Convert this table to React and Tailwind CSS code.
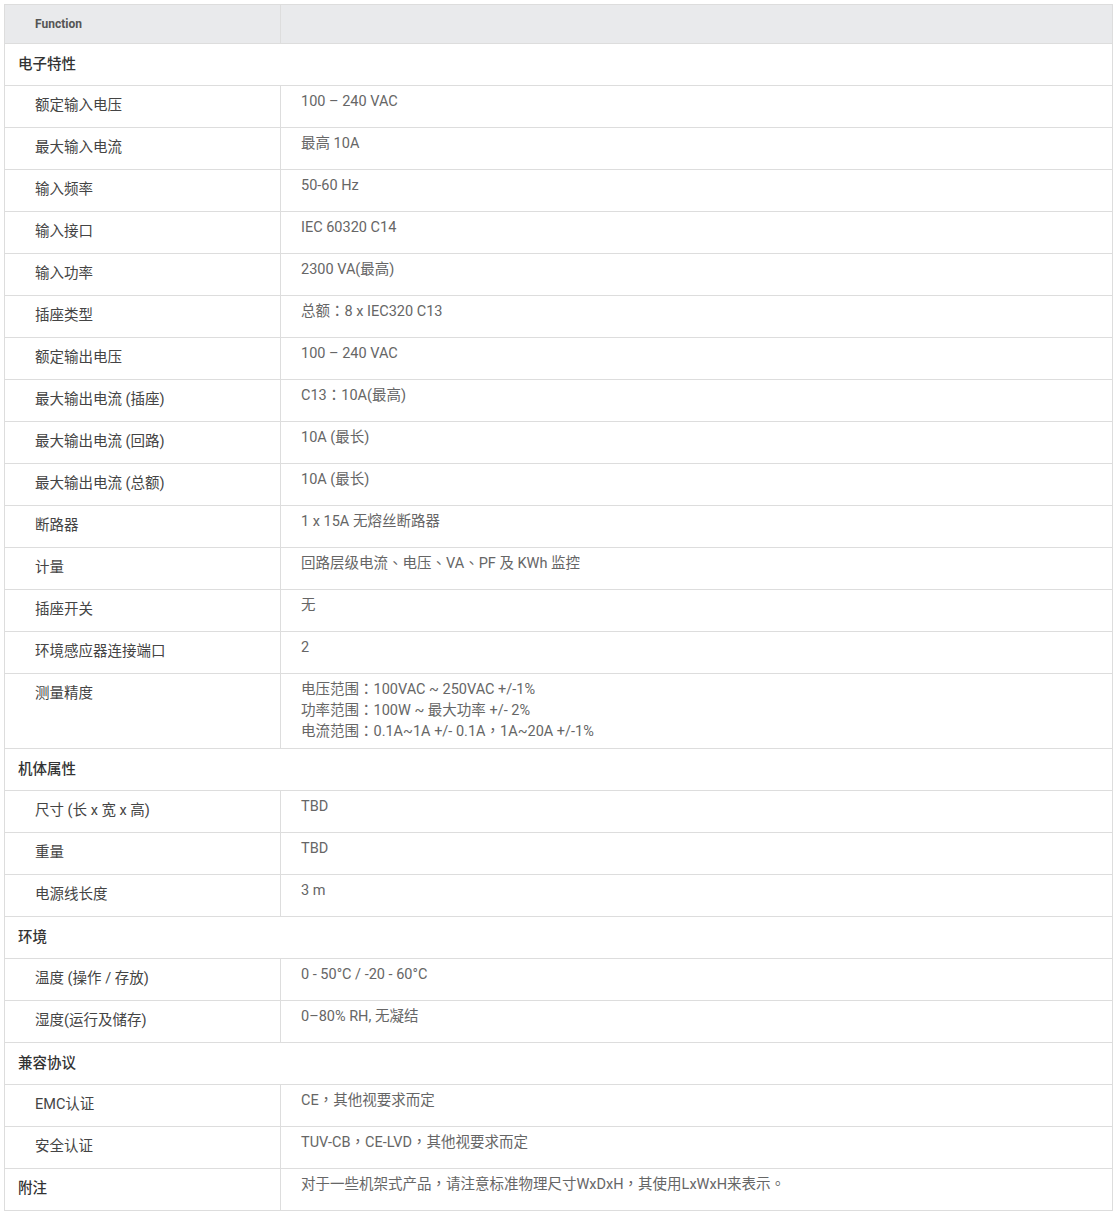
import React from "react";

const sections = [
  {
    title: "电子特性",
    rows: [
      ["额定输入电压", ["100 – 240 VAC"]],
      ["最大输入电流", ["最高 10A"]],
      ["输入频率", ["50-60 Hz"]],
      ["输入接口", ["IEC 60320 C14"]],
      ["输入功率", ["2300 VA(最高)"]],
      ["插座类型", ["总额：8 x IEC320 C13"]],
      ["额定输出电压", ["100 – 240 VAC"]],
      ["最大输出电流 (插座)", ["C13：10A(最高)"]],
      ["最大输出电流 (回路)", ["10A (最长)"]],
      ["最大输出电流 (总额)", ["10A (最长)"]],
      ["断路器", ["1 x 15A 无熔丝断路器"]],
      ["计量", ["回路层级电流、电压、VA、PF 及 KWh 监控"]],
      ["插座开关", ["无"]],
      ["环境感应器连接端口", ["2"]],
      [
        "测量精度",
        [
          "电压范围：100VAC ~ 250VAC +/-1%",
          "功率范围：100W ~ 最大功率 +/- 2%",
          "电流范围：0.1A~1A +/- 0.1A，1A~20A +/-1%",
        ],
      ],
    ],
  },
  {
    title: "机体属性",
    rows: [
      ["尺寸 (长 x 宽 x 高)", ["TBD"]],
      ["重量", ["TBD"]],
      ["电源线长度", ["3 m"]],
    ],
  },
  {
    title: "环境",
    rows: [
      ["温度 (操作 / 存放)", ["0 - 50°C / -20 - 60°C"]],
      ["湿度(运行及储存)", ["0–80% RH, 无凝结"]],
    ],
  },
  {
    title: "兼容协议",
    rows: [
      ["EMC认证", ["CE，其他视要求而定"]],
      ["安全认证", ["TUV-CB，CE-LVD，其他视要求而定"]],
    ],
  },
];

const valueFont = { fontFamily: "Roboto, 'Noto Sans CJK TC', sans-serif" };

function Row({ label, lines }) {
  return (
    <div className="flex border-b border-[#dddddd]">
      <div className="w-[276px] shrink-0 border-r border-[#dddddd] pl-[30px] pt-[9px] pb-[11px] leading-[21px] text-[#444]">
        {label}
      </div>
      <div
        className="flex-1 pl-[20px] pt-[5px] pb-[6px] leading-[21px] text-[#666]"
        style={valueFont}
      >
        {lines.map((l, i) => (
          <div key={i}>{l}</div>
        ))}
      </div>
    </div>
  );
}

export default function App() {
  return (
    <div
      className="bg-white min-h-[1232px] pt-[4px] pl-[4px] text-[14.5px]"
      style={{ fontFamily: "Roboto, 'Noto Sans CJK SC', sans-serif" }}
    >
      <div className="w-[1109px] border border-[#dddddd]">
        <div className="flex h-[39px] bg-[#e9eaec] border-b border-[#dddddd]">
          <div className="w-[276px] shrink-0 border-r border-[#dddddd] pl-[30px] flex items-center text-[12px] font-bold text-[#555]">
            Function
          </div>
          <div className="flex-1" />
        </div>
        {sections.map((s) => (
          <React.Fragment key={s.title}>
            <div className="border-b border-[#dddddd] pl-[13px] pt-[10px] pb-[10px] leading-[21px] text-[#333] font-medium">
              {s.title}
            </div>
            {s.rows.map(([label, lines]) => (
              <Row key={label} label={label} lines={lines} />
            ))}
          </React.Fragment>
        ))}
        <div className="flex">
          <div className="w-[276px] shrink-0 border-r border-[#dddddd] pl-[13px] pt-[9px] pb-[11px] leading-[21px] text-[#333] font-medium">
            附注
          </div>
          <div
            className="flex-1 pl-[20px] pt-[5px] pb-[6px] leading-[21px] text-[#666]"
            style={valueFont}
          >
            对于一些机架式产品，请注意标准物理尺寸WxDxH，其使用LxWxH来表示。
          </div>
        </div>
      </div>
    </div>
  );
}
